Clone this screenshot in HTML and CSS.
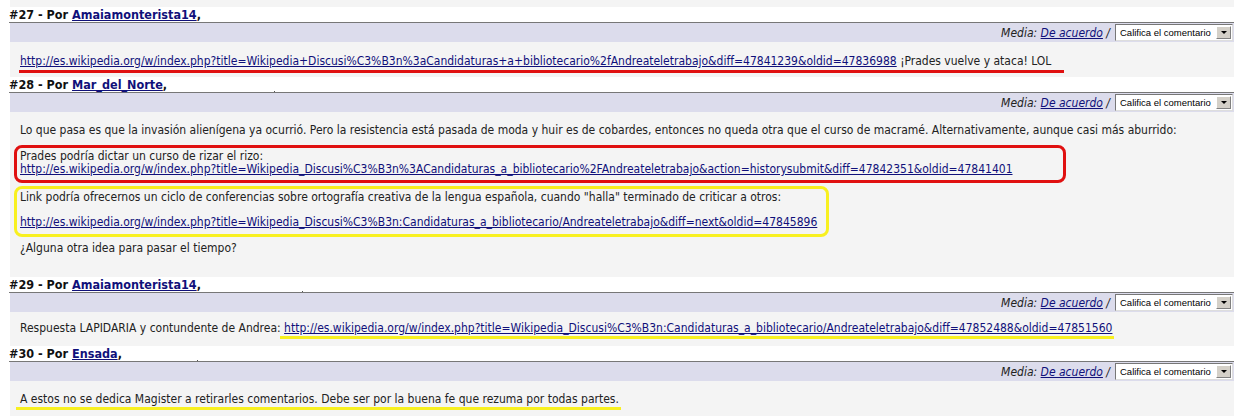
FILE: index.html
```html
<!DOCTYPE html>
<html lang="es">
  <head>
    <meta charset="UTF-8">
    <title>Comentarios</title>
    <link rel="stylesheet" href="styles.css">
  </head>
  <body>
    <div class="wrap">
      <div class="c-body prev"></div>

      <div class="comment">
        <div class="c-head">#27 - Por <a href="#">Amaiamonterista14</a>,</div>
        <div class="c-rate">
          <span class="media">Media: <a href="#">De acuerdo</a> /</span>
          <span class="select">Califica el comentario<span class="btn"></span></span>
        </div>
        <div class="c-body">
          <p class="one"><span class="mark-red"><a href="#">http://es.wikipedia.org/w/index.php?title=Wikipedia+Discusi%C3%B3n%3aCandidaturas+a+bibliotecario%2fAndreateletrabajo&amp;diff=47841239&amp;oldid=47836988</a> ¡Prades vuelve y ataca! LOL</span></p>
        </div>
      </div>

      <div class="comment">
        <div class="c-head">#28 - Por <a href="#">Mar_del_Norte</a>,<span class="dot dot-28"></span></div>
        <div class="c-rate">
          <span class="media">Media: <a href="#">De acuerdo</a> /</span>
          <span class="select">Califica el comentario<span class="btn"></span></span>
        </div>
        <div class="c-body">
          <p class="intro">Lo que pasa es que la invasión alienígena ya ocurrió. Pero la resistencia está pasada de moda y huir es de cobardes, entonces no queda otra que el curso de macramé. Alternativamente, aunque casi más aburrido:</p>
          <div class="ring ring-red">
            Prades podría dictar un curso de rizar el rizo:<br>
            <a href="#">http://es.wikipedia.org/w/index.php?title=Wikipedia_Discusi%C3%B3n%3ACandidaturas_a_bibliotecario%2FAndreateletrabajo&amp;action=historysubmit&amp;diff=47842351&amp;oldid=47841401</a>
          </div>
          <div class="ring ring-yellow">
            <p>Link podría ofrecernos un ciclo de conferencias sobre ortografía creativa de la lengua española, cuando "halla" terminado de criticar a otros:</p>
            <p><a href="#">http://es.wikipedia.org/w/index.php?title=Wikipedia_Discusi%C3%B3n:Candidaturas_a_bibliotecario/Andreateletrabajo&amp;diff=next&amp;oldid=47845896</a></p>
          </div>
          <p class="last">¿Alguna otra idea para pasar el tiempo?</p>
        </div>
      </div>

      <div class="comment">
        <div class="c-head">#29 - Por <a href="#">Amaiamonterista14</a>,<span class="dot dot-29"></span></div>
        <div class="c-rate">
          <span class="media">Media: <a href="#">De acuerdo</a> /</span>
          <span class="select">Califica el comentario<span class="btn"></span></span>
        </div>
        <div class="c-body">
          <p class="two">Respuesta LAPIDARIA y contundente de Andrea: <span class="mark-yellow"><a href="#">http://es.wikipedia.org/w/index.php?title=Wikipedia_Discusi%C3%B3n:Candidaturas_a_bibliotecario/Andreateletrabajo&amp;diff=47852488&amp;oldid=47851560</a></span></p>
        </div>
      </div>

      <div class="comment">
        <div class="c-head">#30 - Por <a href="#">Ensada</a>,<span class="dot dot-30"></span></div>
        <div class="c-rate">
          <span class="media">Media: <a href="#">De acuerdo</a> /</span>
          <span class="select">Califica el comentario<span class="btn"></span></span>
        </div>
        <div class="c-body">
          <p class="three"><span class="mark-yellow">A estos no se dedica Magister a retirarles comentarios. Debe ser por la buena fe que rezuma por todas partes.</span></p>
        </div>
      </div>
    </div>
  </body>
</html>
```

FILE: styles.css
```css
body, html {
  margin: 0;
  padding: 0;
  background: #fff;
  font-family: 'DejaVu Sans Condensed', 'DejaVu Sans', sans-serif;
  font-size: 12px;
  color: #222;
  overflow: hidden;
}

a {
  color: #10107a;
}

.wrap {
  width: 1225px;
  margin-left: 9px;
}

.prev {
  height: 7px;
}

/* cabecera del comentario */
.c-head {
  height: 15px;
  line-height: 15px;
  font-size: 12.5px;
  font-weight: bold;
  color: #111;
  border-bottom: 1px solid #777;
}

.c-head a {
  color: #10107a;
}

.dot {
  display: inline-block;
  width: 1px;
  height: 1px;
  background: #555;
  vertical-align: -3px;
}

.dot-28 { margin-left: 107px; }
.dot-29 { margin-left: 101px; }
.dot-30 { margin-left: 75px; }

/* barra de calificación */
.c-rate {
  height: 19px;
  margin-left: 1px;
  background-color: #dcdcec;
  display: flex;
  justify-content: flex-end;
  align-items: center;
  padding-right: 1px;
}

.media {
  font-style: italic;
  color: #222;
  margin-right: 5px;
}

.select {
  position: relative;
  width: 112px;
  height: 15px;
  line-height: 15px;
  background: #fff;
  border: 1px solid #777;
  border-right-color: #ddd;
  border-bottom-color: #ddd;
  font-family: 'Liberation Sans', Arial, sans-serif;
  font-size: 9.5px;
  color: #000;
  padding-left: 4px;
  white-space: nowrap;
  overflow: hidden;
}

.btn {
  position: absolute;
  right: 1px;
  top: 1px;
  width: 15px;
  height: 13px;
  background: #d4d0c8;
  border: 1px solid #fff;
  border-right-color: #808080;
  border-bottom-color: #808080;
  box-sizing: border-box;
}

.btn::after {
  content: "";
  position: absolute;
  left: 4px;
  top: 4px;
  border-left: 3px solid transparent;
  border-right: 3px solid transparent;
  border-top: 3px solid #000;
}

/* cuerpo */
.c-body {
  margin-left: 1px;
  background-color: #f4f4f4;
  padding: 0 0 0 10px;
  overflow: hidden;
}

.c-body p {
  margin: 0;
  line-height: 16px;
}

.c-body p.one {
  margin: 11px 0 4px;
}

.c-body p.intro {
  margin: 10px 0 7px;
}

.c-body p.last {
  margin: 3px 0 21px;
}

.c-body p.two {
  margin: 9px 0 7px;
  line-height: 15px;
}

.c-body p.three {
  margin: 11px 0 10px;
  line-height: 15px;
}

.mark-red {
  display: inline-block;
  vertical-align: top;
  border-bottom: 3px solid #e01010;
  padding: 0 13px 1px 1px;
  margin-left: -1px;
  line-height: 16px;
}

.mark-yellow {
  display: inline-block;
  vertical-align: top;
  border-bottom: 3px solid #f8f020;
  line-height: 15px;
  padding-right: 2px;
  margin-left: -4px;
  padding-left: 4px;
}

/* recuadros de anotación */
.ring {
  display: table;
  margin-left: -6px;
  padding: 2px 50px 4px 3px;
  border: 3px solid #e01010;
  border-radius: 8px;
  line-height: 13px;
}

.ring-yellow {
  border-color: #f8f020;
  padding: 0 9px 4px 3px;
  margin-top: 3px;
}

.ring-yellow p {
  margin: 0;
}

.ring-yellow p + p {
  margin-top: 9px;
}
```
